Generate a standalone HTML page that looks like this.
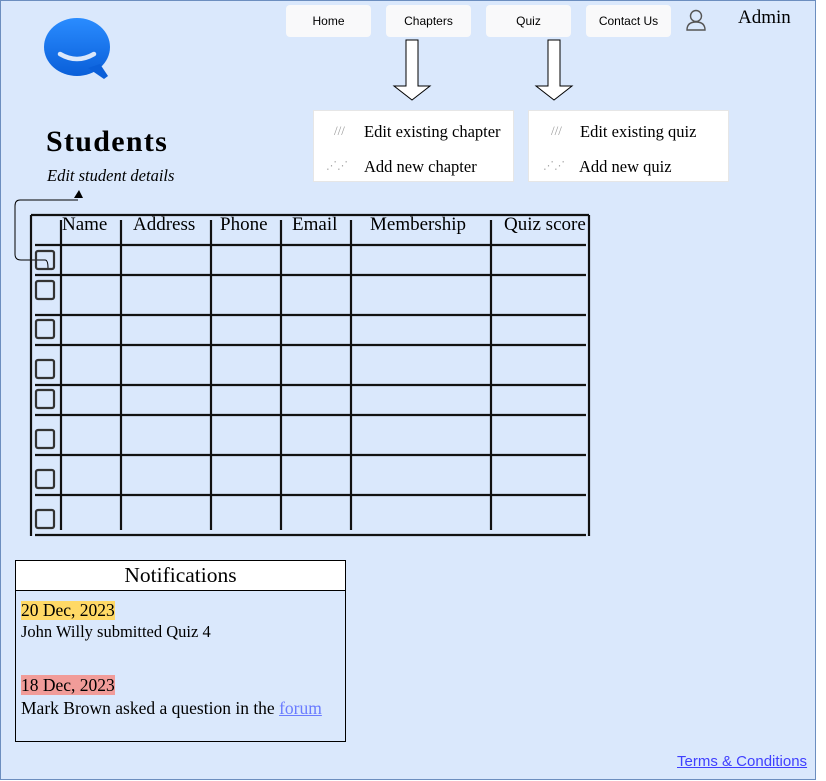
<!DOCTYPE html>
<html><head><style>
body{margin:0;width:826px;height:781px;background:#fff;position:relative;overflow:hidden;font-family:"Liberation Serif",serif;}
#pg{position:absolute;left:0;top:0;width:814px;height:778px;background:#dae8fc;border:1px solid #6c8ebf;}
.a{position:absolute;white-space:nowrap;}
.btn{position:absolute;top:5px;height:32px;width:85px;background:#f9f9fa;border-radius:4px;font:12px "Liberation Sans",sans-serif;text-align:center;line-height:32px;color:#000;}
.dd{position:absolute;top:110px;height:70px;background:#fff;border:1px solid #e6e6e6;font-size:16.5px;}
.dd div{position:absolute;white-space:nowrap;}
.hd{position:absolute;top:214px;font-size:19px;white-space:nowrap;}
</style></head><body>
<div id="pg"></div>
<svg class="a" style="left:44px;top:18px" width="68" height="62" viewBox="0 0 68 62">
<defs><linearGradient id="g" x1="0" y1="0" x2="0" y2="1"><stop offset="0" stop-color="#2a8cff"/><stop offset="1" stop-color="#0a5fd9"/></linearGradient></defs>
<ellipse cx="33" cy="29" rx="33" ry="29" fill="url(#g)"/>
<path d="M44 50 L60 61 L64 58 L56 46 Z" fill="#0a5fd9"/>
<path d="M16 36 Q33 46 50 36" stroke="#dbe8fb" stroke-width="4.5" fill="none" stroke-linecap="round"/>
</svg>
<div class="btn" style="left:286px">Home</div>
<div class="btn" style="left:386px">Chapters</div>
<div class="btn" style="left:486px">Quiz</div>
<div class="btn" style="left:586px">Contact Us</div>
<svg class="a" style="left:684px;top:8px" width="24" height="24" viewBox="0 0 24 24" fill="none" stroke="#555" stroke-width="1.4"><circle cx="12" cy="8" r="5.5"/><path d="M3 22 Q3 14 12 14 Q21 14 21 22 Z"/></svg>
<div class="a" style="left:738px;top:7px;font-size:19px">Admin</div>
<svg class="a" style="left:390px;top:38px" width="200" height="66">
<path d="M16 2 H28 V48 H40 L22 62 L4 48 H16 Z" fill="#fff" stroke="#000" stroke-width="1"/>
<path d="M158 2 H170 V48 H182 L164 62 L146 48 H158 Z" fill="#fff" stroke="#000" stroke-width="1"/>
</svg>
<div class="dd" style="left:313px;width:199px">
<div style="left:20px;top:12px;color:#999;font-size:13px">///</div><div style="left:50px;top:11px">Edit existing chapter</div>
<div style="left:12px;top:48px;color:#aaa;font-size:11px">⋰⋰</div><div style="left:50px;top:46px">Add new chapter</div>
</div>
<div class="dd" style="left:528px;width:199px">
<div style="left:22px;top:12px;color:#999;font-size:13px">///</div><div style="left:51px;top:11px">Edit existing quiz</div>
<div style="left:14px;top:48px;color:#aaa;font-size:11px">⋰⋰</div><div style="left:50px;top:46px">Add new quiz</div>
</div>
<div class="a" style="left:46px;top:125px;font-size:30px;letter-spacing:1.3px;font-weight:bold">Students</div>
<div class="a" style="left:47px;top:166px;font-size:16.5px;font-style:italic">Edit student details</div>
<svg class="a" style="left:0;top:180px" width="600" height="365">
<path d="M78 20 H20 Q15 20 15 26 V74 Q15 80 21 80 H45 Q48 80 48 88" fill="none" stroke="#000" stroke-width="1"/>
<path d="M74 18 L79 10 L83 18 Z" fill="#000"/>
<g stroke="#111" stroke-width="2.2">
<line x1="31" y1="35" x2="589" y2="35"/>
<line x1="31" y1="35" x2="31" y2="356"/>
<line x1="589" y1="35" x2="589" y2="356"/>
<line x1="61" y1="40" x2="61" y2="350"/>
<line x1="121" y1="40" x2="121" y2="350"/>
<line x1="211" y1="40" x2="211" y2="350"/>
<line x1="281" y1="40" x2="281" y2="350"/>
<line x1="351" y1="40" x2="351" y2="350"/>
<line x1="491" y1="40" x2="491" y2="350"/>
<line x1="35" y1="65" x2="586" y2="65"/>
<line x1="35" y1="95" x2="586" y2="95"/>
<line x1="35" y1="135" x2="586" y2="135"/>
<line x1="35" y1="165" x2="586" y2="165"/>
<line x1="35" y1="205" x2="586" y2="205"/>
<line x1="35" y1="235" x2="586" y2="235"/>
<line x1="35" y1="275" x2="586" y2="275"/>
<line x1="35" y1="315" x2="586" y2="315"/>
<line x1="35" y1="355" x2="586" y2="355"/>
</g>
<g fill="none" stroke="#333" stroke-width="2.2">
<rect x="36" y="71" width="18" height="18" rx="2"/>
<rect x="36" y="101" width="18" height="18" rx="2"/>
<rect x="36" y="140" width="18" height="18" rx="2"/>
<rect x="36" y="180" width="18" height="18" rx="2"/>
<rect x="36" y="210" width="18" height="18" rx="2"/>
<rect x="36" y="250" width="18" height="18" rx="2"/>
<rect x="36" y="290" width="18" height="18" rx="2"/>
<rect x="36" y="330" width="18" height="18" rx="2"/>
</g>
</svg>
<div class="hd" style="left:62px">Name</div>
<div class="hd" style="left:133px">Address</div>
<div class="hd" style="left:220px">Phone</div>
<div class="hd" style="left:292px">Email</div>
<div class="hd" style="left:370px">Membership</div>
<div class="hd" style="left:504px">Quiz score</div>
<div class="a" style="left:15px;top:560px;width:329px;height:180px;border:1px solid #000;">
<div style="height:29px;background:#fff;border-bottom:1px solid #000;text-align:center;font-size:21.5px;line-height:29px">Notifications</div>
<div class="a" style="left:5px;top:40px;font-size:17.5px;background:#ffd966;line-height:19px">20 Dec, 2023</div>
<div class="a" style="left:5px;top:61px;font-size:16.5px">John Willy submitted Quiz 4</div>
<div class="a" style="left:5px;top:114px;font-size:17.5px;background:#f19c99;line-height:20px">18 Dec, 2023</div>
<div class="a" style="left:5px;top:137px;font-size:17.5px">Mark Brown asked a question in the <span style="color:#6a7bff;text-decoration:underline">forum</span></div>
</div>
<div class="a" style="left:677px;top:753px;font:15px 'Liberation Sans',sans-serif;color:#3f3fff;text-decoration:underline">Terms &amp; Conditions</div>
</body></html>
